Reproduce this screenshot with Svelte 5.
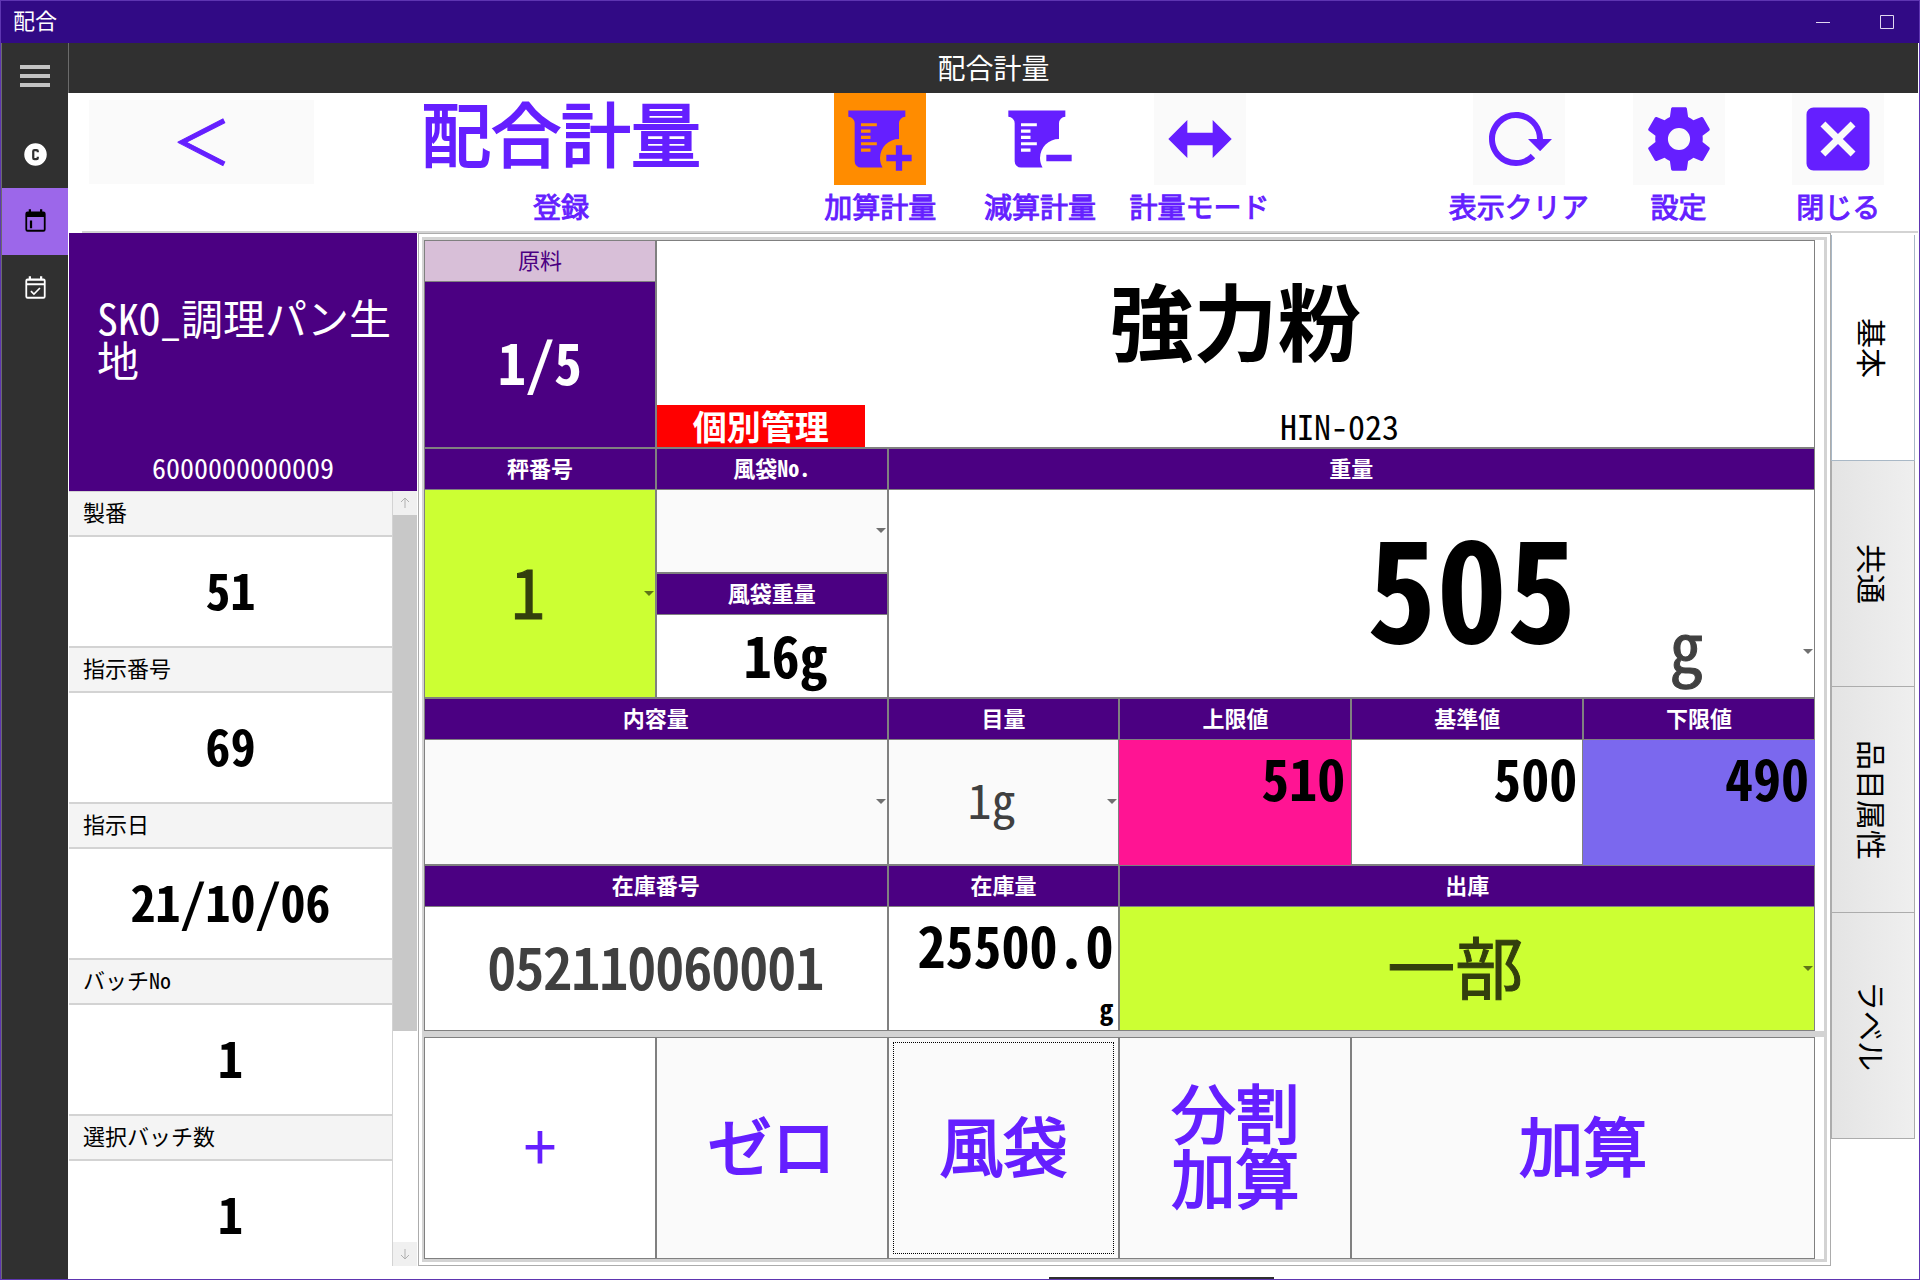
<script lang="ts">
	interface Tool {
		label: string;
		icon: string;
		size: 's' | 'm' | 'l';
		look: 'active' | 'clear' | 'plain';
	}

	const beaker =
		'M2,3H20V5A2,2 0 0,0 18,7V12A6,6 0 0,0 12,18C12,19.1 12.3,20.1 12.8,21H6A2,2 0 0,1 4,19V7A2,2 0 0,0 2,5V3M6,7V8H11V7H6M6,9V10H9V9H6M6,11V12H9V11H6M6,13V14H11V13H6M6,15V16H9V15H6';

	const weighTools: Tool[] = [
		{
			label: '加算計量',
			icon: `${beaker}M17,14H19V17H22V19H19V22H17V19H14V17H17V14Z`,
			size: 'm',
			look: 'active'
		},
		{ label: '減算計量', icon: `${beaker}M14,17H22V19H14V17Z`, size: 'm', look: 'clear' },
		{
			label: '計量モード',
			icon: 'M8,14V18L2,12L8,6V10H16V6L22,12L16,18V14H8Z',
			size: 'm',
			look: 'plain'
		}
	];

	const systemTools: Tool[] = [
		{
			label: '表示クリア',
			icon: 'M2 12C2 16.97 6.03 21 11 21C13.39 21 15.68 20.06 17.4 18.4L15.9 16.9C14.63 18.25 12.86 19 11 19C4.76 19 1.64 11.46 6.05 7.05C10.46 2.64 18 5.77 18 12H15L19 16H19.1L23 12H20C20 7.03 15.97 3 11 3C6.03 3 2 7.03 2 12Z',
			size: 's',
			look: 'plain'
		},
		{
			label: '設定',
			icon: 'M12,15.5A3.5,3.5 0 0,1 8.5,12A3.5,3.5 0 0,1 12,8.5A3.5,3.5 0 0,1 15.5,12A3.5,3.5 0 0,1 12,15.5M19.43,12.97C19.47,12.65 19.5,12.33 19.5,12C19.5,11.67 19.47,11.34 19.43,11L21.54,9.37C21.73,9.22 21.78,8.95 21.66,8.73L19.66,5.27C19.54,5.05 19.27,4.96 19.05,5.05L16.56,6.05C16.04,5.66 15.5,5.32 14.87,5.07L14.5,2.42C14.46,2.18 14.25,2 14,2H10C9.75,2 9.54,2.18 9.5,2.42L9.13,5.07C8.5,5.32 7.96,5.66 7.44,6.05L4.95,5.05C4.73,4.96 4.46,5.05 4.34,5.27L2.34,8.73C2.21,8.95 2.27,9.22 2.46,9.37L4.57,11C4.53,11.34 4.5,11.67 4.5,12C4.5,12.33 4.53,12.65 4.57,12.97L2.46,14.63C2.27,14.78 2.21,15.05 2.34,15.27L4.34,18.73C4.46,18.95 4.73,19.03 4.95,18.95L7.44,17.94C7.96,18.34 8.5,18.68 9.13,18.93L9.5,21.58C9.54,21.82 9.75,22 10,22H14C14.25,22 14.46,21.82 14.5,21.58L14.87,18.93C15.5,18.67 16.04,18.34 16.56,17.94L19.05,18.95C19.27,19.03 19.54,18.95 19.66,18.73L21.66,15.27C21.78,15.05 21.73,14.78 21.54,14.63L19.43,12.97Z',
			size: 'm',
			look: 'plain'
		},
		{
			label: '閉じる',
			icon: 'M19,3H5A2,2 0 0,0 3,5V19A2,2 0 0,0 5,21H19A2,2 0 0,0 21,19V5A2,2 0 0,0 19,3M15.6,17L12,13.4L8.4,17L7,15.6L10.6,12L7,8.4L8.4,7L12,10.6L15.6,7L17,8.4L13.4,12L17,15.6L15.6,17Z',
			size: 'l',
			look: 'plain'
		}
	];

	const details = [
		{ label: '製番', value: '51' },
		{ label: '指示番号', value: '69' },
		{ label: '指示日', value: '21/10/06' },
		{ label: 'バッチNo', value: '1' },
		{ label: '選択バッチ数', value: '1' }
	];

	const tabs = ['基本', '共通', '品目属性', 'ラベル'];
	let activeTab = $state('基本');
	let stockNo = $state('052110060001');
</script>

{#snippet tool(item: Tool)}
	<div class="tool">
		<button class="tool-button {item.look}" aria-label={item.label}>
			<svg class="icon-{item.size}" viewBox="0 0 24 24" aria-hidden="true">
				<path fill-rule="evenodd" d={item.icon} />
			</svg>
		</button>
		<span class="tool-label">{item.label}</span>
	</div>
{/snippet}

<div class="window">
	<div class="titlebar">
		<span>配合</span>
		<div class="window-buttons">
			<button aria-label="最小化"><svg viewBox="0 0 14 14"><path d="M0 7.5H14" /></svg></button>
			<button aria-label="最大化"><svg viewBox="0 0 14 14"><path d="M.5 .5H13.5V13.5H.5Z" /></svg></button>
		</div>
	</div>

	<div class="body">
		<nav class="sidebar">
			<button class="menu" aria-label="メニュー"><i></i><i></i><i></i></button>
			<button class="nav-item" aria-label="会社">
				<svg viewBox="0 0 24 24">
					<path
						fill-rule="evenodd"
						d="M12,2A10,10 0 1,1 12,22A10,10 0 1,1 12,2M11,7A2,2 0 0,0 9,9V15A2,2 0 0,0 11,17H13A2,2 0 0,0 15,15V14H13V15H11V9H13V10H15V9A2,2 0 0,0 13,7H11Z"
					/>
				</svg>
			</button>
			<button class="nav-item selected" aria-label="配合計量">
				<svg viewBox="0 0 24 24">
					<path
						fill-rule="evenodd"
						d="M7,11H9V18H7V11M19,3H18V1H16V3H8V1H6V3H5A2,2 0 0,0 3,5V19A2,2 0 0,0 5,21H19A2,2 0 0,0 21,19V5A2,2 0 0,0 19,3M19,19.4H4.6V8H19.4V19.4Z"
					/>
				</svg>
			</button>
			<button class="nav-item" aria-label="予定">
				<svg viewBox="0 0 24 24">
					<path
						fill-rule="evenodd"
						d="M19,3H18V1H16V3H8V1H6V3H5A2,2 0 0,0 3,5V19A2,2 0 0,0 5,21H19A2,2 0 0,0 21,19V5A2,2 0 0,0 19,3M19,19.4H4.6V9H19.4V19.4M19.4,7.4H4.6V5H19.4V7.4M16.5,12.1L15.4,11L10.6,15.9L8.5,13.8L7.4,14.9L10.6,18L16.5,12.1Z"
					/>
				</svg>
			</button>
		</nav>

		<main>
			<div class="page-title">配合計量</div>

			<header class="toolbar">
				<button class="back">＜</button>
				<div class="heading">
					<h1>配合計量</h1>
					<span class="tool-label">登録</span>
				</div>
				{#each weighTools as item}
					{@render tool(item)}
				{/each}
				<div></div>
				{#each systemTools as item}
					{@render tool(item)}
				{/each}
			</header>

			<div class="content">
				<aside class="order">
					<div class="product">
						<p class="product-name">SKO_調理パン生地</p>
						<p class="product-code">6000000000009</p>
					</div>
					<div class="details">
						<dl>
							{#each details as detail}
								<dt>{detail.label}</dt>
								<dd>{detail.value}</dd>
							{/each}
						</dl>
						<div class="scrollbar">
							<svg viewBox="0 0 12 12"><path d="M6 11V1M2 5L6 1L10 5" /></svg>
							<div class="track"><div class="thumb"></div></div>
							<svg viewBox="0 0 12 12"><path d="M6 1V11M2 7L6 11L10 7" /></svg>
						</div>
					</div>
				</aside>

				<section class="panel">
					<div class="grid">
						<div class="head light">原料</div>
						<div class="cell material">
							<strong>強力粉</strong>
							<div class="material-foot">
								<span class="badge">個別管理</span>
								<span class="code">HIN-023</span>
							</div>
						</div>
						<div class="cell count">1/5</div>

						<label class="head" for="scale">秤番号</label>
						<label class="head" for="tare">風袋No.</label>
						<div class="head span4">重量</div>
						<div class="cell lime scale">
							<select id="scale"><option>1</option></select>
						</div>
						<div class="cell grey">
							<select id="tare"><option></option></select>
						</div>
						<div class="cell weight">
							<output>505</output>
							<select class="unit" aria-label="単位"><option>g</option></select>
						</div>
						<div class="head">風袋重量</div>
						<div class="cell tare-weight">16g</div>

						<label class="head span2" for="volume">内容量</label>
						<label class="head" for="step">目量</label>
						<div class="head">上限値</div>
						<div class="head">基準値</div>
						<div class="head">下限値</div>
						<div class="cell grey span2">
							<select id="volume"><option></option></select>
						</div>
						<div class="cell grey">
							<select id="step" class="small"><option>1g</option></select>
						</div>
						<div class="cell limit upper">510</div>
						<div class="cell limit">500</div>
						<div class="cell limit lower">490</div>

						<label class="head span2" for="stock">在庫番号</label>
						<div class="head">在庫量</div>
						<label class="head span3" for="issue">出庫</label>
						<div class="cell span2">
							<input id="stock" type="text" bind:value={stockNo} />
						</div>
						<div class="cell limit">25500.0<small>g</small></div>
						<div class="cell lime span3">
							<select id="issue"><option>一部</option></select>
						</div>
					</div>

					<div class="actions">
						<button class="white">+</button>
						<button>ゼロ</button>
						<button class="focused">風袋</button>
						<button>分割<br />加算</button>
						<button class="span2">加算</button>
					</div>
				</section>

				<div class="tabs" role="tablist">
					{#each tabs as tab}
						<button
							role="tab"
							aria-selected={activeTab === tab}
							class:active={activeTab === tab}
							onclick={() => (activeTab = tab)}
						>
							{tab}
						</button>
					{/each}
				</div>
			</div>
			<div class="footer"><i></i></div>
		</main>
	</div>
</div>

<style>
	:global(body) {
		background: #fff;
	}

	.window {
		--violet: #651fff;
		--indigo: #4b0082;
		box-sizing: border-box;
		display: flex;
		flex-direction: column;
		height: 100vh;
		border: 1px solid #5e35b1;
		font-family: 'Noto Sans Mono CJK JP', 'Noto Sans CJK JP', sans-serif;
		font-feature-settings: 'hwid';
		font-weight: 500;
		color: #000;
	}

	.window :global(*) {
		box-sizing: border-box;
	}

	button,
	select,
	input {
		margin: 0;
		padding: 0;
		border: 0;
		border-radius: 0;
		background: none;
		color: inherit;
		font: inherit;
		font-feature-settings: inherit;
	}

	.titlebar {
		flex: 0 0 42px;
		display: flex;
		align-items: flex-start;
		justify-content: space-between;
		padding-left: 12px;
		background: #310a85;
		color: #fff;
		font-size: 22px;
		font-weight: 400;
		line-height: 36px;
	}

	.window-buttons {
		display: flex;
	}

	.window-buttons button {
		display: grid;
		place-items: center;
		width: 64px;
		height: 42px;
	}

	.window-buttons svg {
		width: 14px;
		height: 14px;
		fill: none;
		stroke: #e0d8f0;
	}

	.body {
		flex: 1;
		min-height: 0;
		display: flex;
	}

	.sidebar {
		flex: 0 0 67px;
		border-left: 1px solid #6b6b6b;
		background: #303030;
	}

	.menu {
		display: flex;
		flex-direction: column;
		justify-content: center;
		align-items: center;
		gap: 5px;
		width: 100%;
		height: 66px;
	}

	.menu i {
		width: 30px;
		height: 4px;
		background: #c4c4c4;
	}

	.nav-item {
		display: grid;
		place-items: center;
		width: 100%;
		height: 67px;
	}

	.menu + .nav-item {
		margin-top: 12px;
	}

	.nav-item svg {
		width: 27px;
		height: 27px;
		fill: #fff;
	}

	.nav-item.selected {
		background: #9c67ea;
	}

	.nav-item.selected svg {
		fill: #000;
	}

	main {
		flex: 1;
		min-width: 0;
		display: flex;
		flex-direction: column;
		margin-right: 1px;
	}

	.page-title {
		flex: 0 0 50px;
		border-left: 1px solid #6b6b6b;
		background: #303030;
		color: #fff;
		font-size: 28px;
		line-height: 48px;
		font-weight: 400;
		text-align: center;
	}

	.toolbar {
		flex: 0 0 140px;
		display: grid;
		grid-template-columns: 3fr 6fr repeat(7, 2fr);
		margin-left: 14px;
		border-bottom: 2px solid #d3d3d3;
		color: var(--violet);
	}

	.back {
		height: 84px;
		margin: 7px;
		padding-bottom: 6px;
		background: #fafafa;
		font-feature-settings: normal;
		font-size: 60px;
		line-height: 76px;
		-webkit-text-stroke: 1px;
	}

	.heading,
	.tool {
		display: flex;
		flex-direction: column;
		align-items: center;
	}

	h1 {
		height: 92px;
		margin: 0;
		font-size: 70px;
		line-height: 78px;
		font-weight: 500;
		-webkit-text-stroke: 2px;
	}

	.tool-button {
		display: grid;
		place-items: center;
		width: 92px;
		height: 92px;
		background: #fafafa;
	}

	.tool-button.active {
		background: #ff8c00;
	}

	.tool-button.clear {
		background: #fff;
	}

	.tool-button svg {
		fill: var(--violet);
	}

	.icon-s {
		width: 72px;
		height: 72px;
	}

	.icon-m {
		width: 76px;
		height: 76px;
	}

	.icon-l {
		width: 84px;
		height: 84px;
	}

	.tool-label {
		font-size: 28px;
		line-height: 42px;
		white-space: nowrap;
		-webkit-text-stroke: 1px;
	}

	.content {
		flex: 1;
		min-height: 0;
		display: flex;
		margin-left: 1px;
	}

	.order {
		flex: 0 0 348px;
		display: flex;
		flex-direction: column;
		min-height: 0;
	}

	.product {
		flex: 0 0 258px;
		display: flex;
		flex-direction: column;
		background: var(--indigo);
		color: #fff;
		font-weight: 400;
	}

	.product-name {
		flex: 1;
		margin: 0;
		padding: 63px 24px 0 28px;
		font-size: 42px;
		line-height: 42px;
		word-break: break-all;
	}

	.product-code {
		margin: 0;
		padding-bottom: 4px;
		font-size: 28px;
		line-height: 40px;
		text-align: center;
	}

	.details {
		flex: 1;
		min-height: 0;
		display: flex;
	}

	dl {
		flex: 1;
		margin: 0;
		overflow: hidden;
	}

	dt {
		height: 46px;
		padding-left: 14px;
		border-top: 1px solid #d3d3d3;
		border-bottom: 2px solid #d3d3d3;
		background: #f4f4f4;
		font-size: 22px;
		line-height: 38px;
	}

	dd {
		height: 110px;
		margin: 0;
		border-bottom: 1px solid #d3d3d3;
		font-size: 50px;
		line-height: 102px;
		font-weight: 700;
		text-align: center;
	}

	.scrollbar {
		flex: 0 0 25px;
		display: flex;
		flex-direction: column;
		border-left: 1px solid #d3d3d3;
	}

	.scrollbar svg {
		width: 24px;
		height: 24px;
		padding: 6px;
		background: #f0f0f0;
		fill: none;
		stroke: #b0b0b0;
	}

	.track {
		flex: 1;
	}

	.thumb {
		height: 71%;
		background: #c8c8c8;
	}

	.panel {
		flex: 1;
		min-width: 0;
		min-height: 0;
		display: grid;
		grid-template-rows: minmax(0, 796fr) minmax(0, 229fr);
		margin-left: 1px;
		padding: 3px;
		border: 1px solid #acacac;
	}

	.grid,
	.actions {
		min-height: 0;
		display: grid;
		grid-template-columns: repeat(6, minmax(0, 1fr));
		padding-right: 9px;
		border: 3px solid #d3d3d3;
		border-left-width: 2px;
	}

	/* the two frames share one rule between them */
	.grid {
		grid-template-rows:
			42px minmax(0, 166fr) 42px minmax(0, 83fr) 42px minmax(0, 83fr)
			42px minmax(0, 125fr) 42px minmax(0, 124fr);
		border-bottom-width: 2px;
	}

	.actions {
		border-top-width: 4px;
	}

	.head {
		border: 1px solid #808080;
		background: var(--indigo);
		color: #fff;
		font-size: 22px;
		line-height: 37px;
		font-weight: 700;
		text-align: center;
	}

	.head.light {
		background: #d8bfd8;
		color: var(--indigo);
		font-weight: 500;
	}

	.cell {
		position: relative;
		min-width: 0;
		min-height: 0;
		border: 1px solid #808080;
		border-top: 0;
		background: #fff;
	}

	.span2 {
		grid-column: span 2;
	}

	.span3 {
		grid-column: span 3;
	}

	.span4 {
		grid-column: span 4;
	}

	.material {
		grid-column: 2 / 7;
		grid-row: 1 / 3;
		display: flex;
		flex-direction: column;
		border-top: 1px solid #808080;
		text-align: center;
	}

	.material strong {
		flex: 1;
		padding-top: 24px;
		font-size: 84px;
		line-height: 108px;
		font-weight: 700;
	}

	.material-foot {
		display: flex;
	}

	.badge {
		padding: 0 36px;
		background: #f00;
		color: #fff;
		font-size: 34px;
		line-height: 42px;
		font-weight: 700;
	}

	.code {
		flex: 1;
		font-size: 34px;
		line-height: 42px;
	}

	.count {
		display: grid;
		place-items: center;
		padding-bottom: 8px;
		background: var(--indigo);
		color: #fff;
		font-size: 56px;
		line-height: 64px;
		font-weight: 700;
	}

	.lime {
		background: #ccff33;
		color: #333f0d;
	}

	.grey {
		background: #fafafa;
	}

	.scale {
		grid-row: span 3;
	}

	select {
		display: block;
		width: 100%;
		height: 100%;
		padding: 0 24px 8px 0;
		appearance: none;
		color: #404040;
		font-size: 68px;
		font-weight: 400;
		text-align: center;
		text-align-last: center;
	}

	.lime select {
		color: #333f0d;
		-webkit-text-stroke: 1px;
	}

	select.small {
		font-size: 48px;
	}

	/* drop-down arrow */
	.cell:has(select)::after {
		content: '';
		position: absolute;
		right: 1px;
		top: calc(50% - 3px);
		border: 5px solid transparent;
		border-top-color: #707070;
		border-bottom: 0;
		pointer-events: none;
	}

	.cell.lime::after {
		border-top-color: #5f7518;
	}

	.weight {
		grid-column: 3 / 7;
		grid-row: span 3;
		display: grid;
		grid-template-columns: 3fr 1fr;
		align-items: center;
	}

	.weight output {
		padding: 0 6px 24px 0;
		font-size: 140px;
		line-height: 180px;
		font-weight: 700;
		text-align: right;
	}

	.weight .unit {
		align-self: end;
		height: 108px;
		padding-bottom: 0;
		-webkit-text-stroke: 1px;
	}

	.cell.weight::after {
		top: auto;
		bottom: 43px;
	}

	.tare-weight {
		display: grid;
		place-items: center;
		padding: 0 0 4px 28px;
		font-size: 56px;
		line-height: 64px;
		font-weight: 700;
	}

	.limit {
		display: flex;
		flex-direction: column;
		justify-content: space-between;
		padding: 4px 5px 6px;
		font-size: 56px;
		line-height: 66px;
		font-weight: 700;
		text-align: right;
	}

	.limit small {
		font-size: 28px;
		line-height: 32px;
	}

	.upper {
		border-color: #ff1493;
		background: #ff1493;
	}

	.lower {
		border-color: #7b68ee;
		background: #7b68ee;
	}

	input {
		width: 100%;
		height: 100%;
		padding-bottom: 8px;
		color: #404040;
		font-size: 56px;
		text-align: center;
		-webkit-text-stroke: 2px;
	}

	.actions button {
		padding-bottom: 10px;
		border: 1px solid #808080;
		background: #fafafa;
		color: var(--violet);
		font-size: 64px;
		line-height: 65px;
		-webkit-text-stroke: 2px;
	}

	.actions .white {
		background: #fff;
		-webkit-text-stroke: 0;
	}

	.actions .focused {
		outline: 1px dotted #000;
		outline-offset: -6px;
	}

	.tabs {
		flex: 0 0 87px;
		display: flex;
		flex-direction: column;
		padding: 2px 3px 0 0;
	}

	.tabs button {
		height: 226px;
		border: 1px solid #acacac;
		border-top: 0;
		background: linear-gradient(to right, #e4e4e4, #efefef);
		font-size: 30px;
		line-height: 34px;
		font-weight: 400;
		writing-mode: vertical-rl;
		text-orientation: sideways;
	}

	.tabs button.active {
		border-color: #a9b8c6;
		background: #fff;
	}

	.footer {
		flex: 0 0 13px;
		display: flex;
		align-items: flex-end;
		padding-left: 53%;
	}

	.footer i {
		width: 225px;
		height: 2px;
		background: #303030;
	}
</style>
